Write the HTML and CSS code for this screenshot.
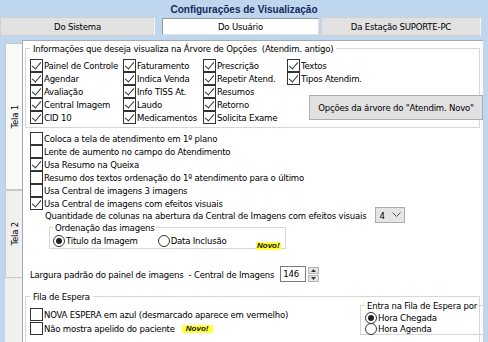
FILE: index.html
```html
<!DOCTYPE html>
<html lang="pt-br">

<head>
  <meta charset="UTF-8">
  <meta name="viewport" content="width=device-width, initial-scale=1.0">
  <title>Configurações de Visualização</title>
  <link rel="stylesheet" href="styles.css">
</head>

<body>
  <div class="janela">
    <div class="titulo">Configurações de Visualização</div>

    <!-- abas de cima -->
    <div class="abas">
      <div class="aba aba-sistema">Do Sistema</div>
      <div class="aba aba-usuario ativa">Do Usuário</div>
      <div class="aba aba-estacao">Da Estação SUPORTE-PC</div>
    </div>

    <div class="corpo">
      <!-- abas do lado -->
      <div class="abas-lado">
        <div class="aba-lado tela1 ativa"><span>Tela 1</span></div>
        <div class="aba-lado tela2"><span>Tela 2</span></div>
        <div class="resto-lado"></div>
      </div>

      <div class="painel">
        <!-- arvore de opcoes -->
        <fieldset class="grupo grupo-arvore">
          <legend>Informações que deseja visualiza na Árvore de Opções&nbsp; (Atendim. antigo)</legend>
          <div class="grade">
            <label class="chk"><span class="caixa marcada"></span>Painel de Controle</label>
            <label class="chk"><span class="caixa marcada"></span>Faturamento</label>
            <label class="chk"><span class="caixa marcada"></span>Prescrição</label>
            <label class="chk"><span class="caixa marcada"></span>Textos</label>
            <label class="chk"><span class="caixa marcada"></span>Agendar</label>
            <label class="chk"><span class="caixa marcada"></span>Indica Venda</label>
            <label class="chk"><span class="caixa marcada"></span>Repetir Atend.</label>
            <label class="chk"><span class="caixa marcada"></span>Tipos Atendim.</label>
            <label class="chk"><span class="caixa marcada"></span>Avaliação</label>
            <label class="chk"><span class="caixa marcada"></span>Info TISS At.</label>
            <label class="chk"><span class="caixa marcada"></span>Resumos</label>
            <label class="chk"><span class="caixa marcada"></span>Central Imagem</label>
            <label class="chk"><span class="caixa marcada"></span>Laudo</label>
            <label class="chk"><span class="caixa marcada"></span>Retorno</label>
            <label class="chk"><span class="caixa marcada"></span>CID 10</label>
            <label class="chk"><span class="caixa marcada"></span>Medicamentos</label>
            <label class="chk"><span class="caixa marcada"></span>Solicita Exame</label>
            <button class="btn-arvore">Opções da árvore do "Atendim. Novo"</button>
          </div>
        </fieldset>

        <!-- opcoes gerais -->
        <div class="lista">
          <label class="chk"><span class="caixa"></span>Coloca a tela de atendimento em 1º plano</label>
          <label class="chk"><span class="caixa"></span>Lente de aumento no campo do Atendimento</label>
          <label class="chk"><span class="caixa marcada"></span>Usa Resumo na Queixa</label>
          <label class="chk"><span class="caixa"></span>Resumo dos textos ordenação do 1º atendimento para o último</label>
          <label class="chk"><span class="caixa"></span>Usa Central de imagens 3 imagens</label>
          <label class="chk"><span class="caixa marcada"></span>Usa Central de imagens com efeitos visuais</label>
        </div>

        <div class="quantidade">
          <span>Quantidade de colunas na abertura da Central de Imagens com efeitos visuais</span>
          <div class="combo">
            <span>4</span>
            <svg width="9" height="6" viewBox="0 0 9 6"><polyline points="0.5,0.5 4.5,4.5 8.5,0.5" fill="none" stroke="#555" stroke-width="1"/></svg>
          </div>
        </div>

        <fieldset class="grupo grupo-ordem">
          <legend>Ordenação das imagens</legend>
          <div class="radios">
            <label class="rad"><span class="radio marcado"></span>Titulo da Imagem</label>
            <label class="rad rad-data"><span class="radio"></span>Data Inclusão</label>
          </div>
          <span class="novo novo-ordem">Novo!</span>
        </fieldset>

        <div class="largura">
          <span>Largura padrão do painel de imagens&nbsp; - Central de Imagens</span>
          <div class="numero">146</div>
          <div class="spin">
            <div class="spin-btn"><svg width="5" height="3" viewBox="0 0 5 3"><polygon points="2.5,0 5,3 0,3" fill="#333"/></svg></div>
            <div class="spin-btn"><svg width="5" height="3" viewBox="0 0 5 3"><polygon points="0,0 5,0 2.5,3" fill="#333"/></svg></div>
          </div>
        </div>

        <!-- fila de espera -->
        <fieldset class="grupo grupo-fila">
          <legend>Fila de Espera</legend>
          <div class="fila-conteudo">
            <div class="fila-opcoes">
              <label class="chk"><span class="caixa"></span>NOVA ESPERA em azul (desmarcado aparece em vermelho)</label>
              <label class="chk"><span class="caixa"></span>Não mostra apelido do paciente<span class="novo novo-fila">Novo!</span></label>
            </div>
            <fieldset class="grupo grupo-entrada">
              <legend>Entra na Fila de Espera por</legend>
              <label class="rad"><span class="radio marcado"></span>Hora Chegada</label>
              <label class="rad"><span class="radio"></span>Hora Agenda</label>
            </fieldset>
          </div>
        </fieldset>
      </div>
    </div>
  </div>
</body>

</html>
```

FILE: styles.css
```css
/* estilo da tela de configuracoes */
* {
  box-sizing: border-box;
}

body {
  margin: 0;
  font-family: "DejaVu Sans Condensed", "Liberation Sans", sans-serif;
  font-size: 9.5px;
  letter-spacing: -0.2px;
  line-height: 13px;
  color: #000;
}

.janela {
  width: 488px;
  height: 342px;
  background: #bfd6ef;
  overflow: hidden;
}

.titulo {
  height: 17px;
  padding-top: 2px;
  line-height: 15px;
  text-align: center;
  font-family: "Liberation Sans", sans-serif;
  font-weight: bold;
  font-size: 10px;
  letter-spacing: 0;
  color: #14295a;
}

/* abas de cima */
.abas {
  display: flex;
  height: 19px;
}

.aba {
  display: flex;
  align-items: center;
  justify-content: center;
  background: #e1e1e1;
  border: 1px solid #cfcfcf;
  border-right-color: #f4f4f4;
}

.aba-sistema {
  width: 155px;
}

.aba-usuario {
  width: 157px;
  margin-left: 7px;
}

.aba-estacao {
  width: 160px;
  margin-left: 2px;
}

.aba.ativa {
  background: #fff;
  border: 1px solid #9a9a9a;
  border-right-color: #e0e0e0;
  border-bottom-color: #e0e0e0;
  margin-top: 1px;
  height: 17px;
}

.corpo {
  display: flex;
  height: 306px;
}

/* abas do lado */
.abas-lado {
  width: 22px;
  padding: 7px 0 0 5px;
  display: flex;
  flex-direction: column;
}

.aba-lado {
  display: flex;
  align-items: center;
  justify-content: center;
  background: #f0f0f0;
  border: 1px solid #c9c9c9;
  border-right: none;
}

.aba-lado span {
  writing-mode: vertical-rl;
  transform: rotate(180deg);
}

.aba-lado.ativa {
  background: #f9f9f9;
}

.tela1 {
  height: 147px;
}

.tela2 {
  height: 88px;
}

.resto-lado {
  flex: 1;
  background: #f0f0f0;
}

.painel {
  width: 461px;
  margin-top: 4px;
  background: #fff;
  border-top: 1px solid #a9a9a9;
  border-left: 1px solid #a9a9a9;
  overflow: hidden;
}

/* grupos */
.grupo {
  margin: 0;
  border: 1px solid #d6d6d6;
  min-width: 0;
}

.grupo legend {
  padding: 0 3px;
  line-height: 13px;
  white-space: nowrap;
}

.grupo-arvore {
  margin: 1px 3px 0 2px;
  padding: 4px 0 3px 4px;
}

.grade {
  display: grid;
  grid-template-columns: 93px 80px 84px 1fr;
  grid-auto-rows: 13px;
}

.chk {
  display: flex;
  align-items: center;
  height: 13px;
  white-space: nowrap;
}

.caixa {
  position: relative;
  flex: none;
  width: 13px;
  height: 13px;
  margin-right: 1px;
  border: 1px solid #333;
  background: #fff;
}

.caixa.marcada::after {
  content: "";
  position: absolute;
  left: 3px;
  top: 0px;
  width: 4px;
  height: 8px;
  border: solid #333;
  border-width: 0 1px 1px 0;
  transform: rotate(40deg);
}

.btn-arvore {
  grid-column: 4;
  grid-row: 3 / 6;
  align-self: end;
  margin: 0 0 4px 22px;
  width: 174px;
  height: 25px;
  padding: 0;
  font: inherit;
  letter-spacing: inherit;
  color: #000;
  background: #e1e1e1;
  border: 1px solid #adadad;
}

.lista {
  margin: 4px 0 0 7px;
}

.quantidade {
  display: flex;
  align-items: center;
  height: 16px;
  margin-top: -3px;
  padding-left: 22px;
  white-space: nowrap;
}

.combo {
  display: flex;
  align-items: center;
  justify-content: space-between;
  width: 30px;
  height: 16px;
  margin-left: 8px;
  padding: 0 3px 0 4px;
  background: #e5e5e5;
  border: 1px solid #adadad;
}

.grupo-ordem {
  position: relative;
  width: 237px;
  margin: -2px 0 0 26px;
  padding: 0 0 1px 3px;
}

.grupo-ordem legend {
  padding: 0 2px;
}

.radios {
  display: flex;
}

.rad {
  display: flex;
  align-items: center;
  height: 13px;
  white-space: nowrap;
}

.rad-data {
  margin-left: 20px;
}

.radio {
  display: flex;
  align-items: center;
  justify-content: center;
  flex: none;
  width: 12px;
  height: 12px;
  margin-right: 1px;
  border: 1px solid #333;
  border-radius: 50%;
  background: #fff;
}

.radio.marcado::after {
  content: "";
  width: 6px;
  height: 6px;
  border-radius: 50%;
  background: #222;
}

.novo {
  font-size: 8px;
  line-height: 8px;
  letter-spacing: 0;
  font-weight: bold;
  font-style: italic;
  font-family: "Liberation Sans", sans-serif;
  background: #ffff3a;
  color: #111;
}

.novo-ordem {
  position: absolute;
  left: 206px;
  top: 8px;
  padding: 0 1px;
}

.novo-fila {
  margin-left: 7px;
  padding: 0 4px;
  height: 8px;
}

.largura {
  display: flex;
  align-items: center;
  height: 16px;
  margin: 17px 0 0 7px;
  white-space: nowrap;
}

.numero {
  width: 26px;
  height: 16px;
  margin-left: 6px;
  padding-left: 2px;
  line-height: 14px;
  border: 1px solid #7a7a7a;
  background: #fff;
}

.spin {
  display: flex;
  flex-direction: column;
  gap: 1px;
  margin-left: 2px;
}

.spin-btn {
  display: flex;
  align-items: center;
  justify-content: center;
  width: 11px;
  height: 7px;
  background: #e5e5e5;
  border: 1px solid #b5b5b5;
}

.grupo-fila {
  margin: 8px 3px 0 2px;
  padding: 0 0 0 4px;
  height: 60px;
}

.grupo-fila legend {
  padding: 0 3px;
}

.fila-conteudo {
  display: flex;
  align-items: flex-start;
}

.fila-opcoes {
  display: flex;
  flex-direction: column;
  gap: 1px;
  padding-top: 5px;
}

.grupo-entrada {
  margin: -4px -4px 0 auto;
  width: 123px;
  padding: 0 0 0 4px;
  border-right: none;
}

.grupo-entrada legend {
  padding: 0 1px 0 2px;
}

.grupo-entrada .rad {
  height: 11px;
}
```
